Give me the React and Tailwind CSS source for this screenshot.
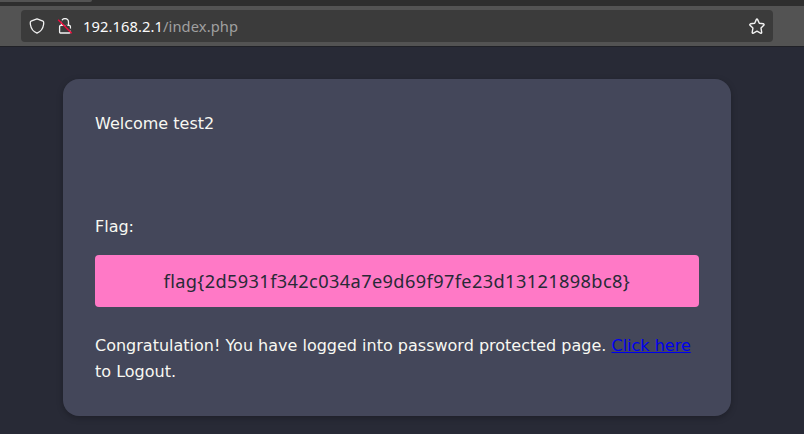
function ShieldIcon() {
  return (
    <svg className="h-4 w-4 shrink-0" viewBox="0 0 16 16" fill="none" stroke="#f2f2f2" strokeWidth="1.3" strokeLinejoin="round">
      <path d="M8 .8 L14 3.1 C14.9 3.4 14.8 5 14.6 6.5 C14 10.5 12 13.5 8 15.2 C4 13.5 2 10.5 1.4 6.5 C1.2 5 1.1 3.4 2 3.1 Z" />
    </svg>
  );
}

function InsecureLockIcon() {
  return (
    <svg className="h-4 w-4 shrink-0" viewBox="0 0 16 16" fill="none">
      <path d="M4.5 7.3 V4 A3.5 3.5 0 0 1 11.5 4 V7.3" stroke="#f2f2f2" strokeWidth="1.3" />
      <rect x="2.6" y="7.4" width="10.8" height="7.6" rx="1.1" stroke="#f2f2f2" strokeWidth="1.3" />
      <path d="M2.6 1 L16 14" stroke="#3b3b3b" strokeWidth="1.6" />
      <path d="M1.2 1.8 L14.7 15.2" stroke="#ee0a3c" strokeWidth="1.6" />
    </svg>
  );
}

function StarIcon() {
  return (
    <svg className="h-[17px] w-[17px] shrink-0" viewBox="0 0 17 17" fill="none" stroke="#f2f2f2" strokeWidth="1.4" strokeLinejoin="round">
      <path d="M9.5 1.4 L11.3 5.2 L15.3 5.8 C16.1 6 16.3 6.7 15.8 7.2 L13 10.1 L13.7 14.3 C13.8 15 13.2 15.4 12.5 15.1 L9 13.2 L5.4 15.1 C4.7 15.4 4.1 15 4.2 14.3 L4.9 10.1 L2 7.2 C1.5 6.7 1.8 6 2.5 5.8 L6.7 5.2 L8.4 1.4 C8.7 .8 9.2 .8 9.5 1.4 Z" />
    </svg>
  );
}

export default function App() {
  return (
    <div className="flex h-[434px] w-[804px] flex-col overflow-hidden bg-[#282a36]">
      <div className="h-1.5 shrink-0 bg-[#2e2e2e]">
        <div className="h-0.5 w-[92px] rounded-br-sm bg-[#535353]" />
      </div>
      <header className="flex h-[41px] shrink-0 border-b border-[#202127] bg-[#535353] pt-1 pl-[21px]">
        <div className="flex h-8 w-[752px] items-center rounded bg-[#3b3b3b] pr-2 pl-2">
          <ShieldIcon />
          <div className="ml-3 flex">
            <InsecureLockIcon />
          </div>
          <div className="ml-2.5 font-['Noto_Sans',sans-serif] text-[14.7px] leading-5 tracking-[0.09px] whitespace-nowrap text-[#a0a0a0]">
            <span className="text-[#fbfbfb]">192.168.2.1</span>/index.php
          </div>
          <div className="ml-auto">
            <StarIcon />
          </div>
        </div>
      </header>
      <main className="mt-8 ml-[63px] h-[337px] w-[668px] shrink-0 rounded-2xl bg-[#44475a] p-8 font-['DejaVu_Sans',sans-serif] text-base leading-[25.6px] text-[#f8f8f2] shadow-[0_2px_6px_rgba(0,0,0,0.25)]">
        <p>Welcome test2</p>
        <p className="mt-[77.4px]">Flag:</p>
        <div className="mt-[15.4px] flex h-[52px] items-center rounded bg-[#ff79c6] pl-[68.5px] font-['Noto_Sans',sans-serif] text-[18.2px] leading-6 tracking-[0.38px] whitespace-nowrap text-[#282a36]">
          <span>{"flag{2d5931f342c034a7e9d69f97fe23d13121898bc8}"}</span>
        </div>
        <p className="mt-[26px]">
          Congratulation! You have logged into password protected page.{" "}
          <a href="#" className="text-[#0000ee] underline">Click here</a> to Logout.
        </p>
      </main>
    </div>
  );
}
